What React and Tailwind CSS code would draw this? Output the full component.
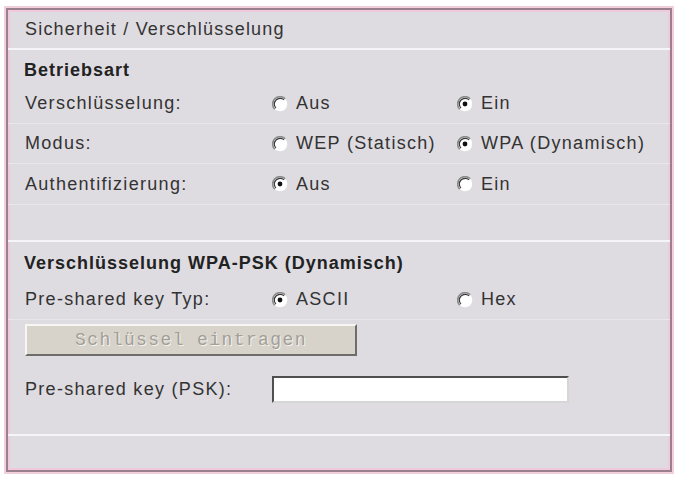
import React from "react";

const font = { fontFamily: '"Liberation Sans", Arial, sans-serif' };

function Radio({ checked }) {
  return (
    <svg width="16" height="16" viewBox="0 0 16 16" className="shrink-0">
      <circle cx="8" cy="8" r="7.3" fill="#ffffff" />
      <path d="M2.8 13.2 A7.3 7.3 0 0 1 13.2 2.8" stroke="#8a8a8a" strokeWidth="1.6" fill="none" />
      <path d="M3.9 12.1 A5.8 5.8 0 0 1 12.1 3.9" stroke="#3a3a3a" strokeWidth="1.2" fill="none" />
      {checked && <circle cx="8" cy="8" r="2.4" fill="#111111" />}
    </svg>
  );
}

function Option({ checked, label }) {
  return (
    <div className="flex items-center gap-[8px]">
      <Radio checked={checked} />
      <span>{label}</span>
    </div>
  );
}

function RadioRow({ label, a, b, checkedA, last }) {
  return (
    <div className={`flex items-center h-[40px] pl-[17px] ${last ? "" : "border-b border-[#e8e6eb]"}`}>
      <div className="w-[247px]">{label}</div>
      <div className="w-[185px]"><Option checked={checkedA} label={a} /></div>
      <div><Option checked={!checkedA} label={b} /></div>
    </div>
  );
}

export default function App() {
  return (
    <div className="w-[674px] h-[478px] bg-white pt-[8px] pl-[6px]" style={font}>
      <div className="w-[666px] h-[464px] border-2 border-[#9a7f8e] bg-[#dedce1] shadow-[0_0_0_2px_#f3cfdd,inset_0_0_0_2px_#efcadb] text-[18px] tracking-[1.3px] text-[#333333] flex flex-col">
        <div className="h-[40px] flex items-center pl-[17px] border-b-2 border-[#f5f4f7] text-[18px] tracking-[1.2px]">
          Sicherheit / Verschlüsselung
        </div>

        <div className="h-[34px] flex items-center pt-[6px] pl-[16px] font-bold tracking-[1px] text-[#222222]">
          Betriebsart
        </div>
        <RadioRow label="Verschlüsselung:" a="Aus" b="Ein" checkedA={false} />
        <RadioRow label="Modus:" a="WEP (Statisch)" b="WPA (Dynamisch)" checkedA={false} />
        <RadioRow label="Authentifizierung:" a="Aus" b="Ein" checkedA={true} last />
        <div className="h-[38px] border-t border-[#e8e6eb] border-b-2 border-b-[#f5f4f7]" />

        <div className="h-[38px] flex items-center pt-[4px] pl-[16px] font-bold tracking-[1px] text-[#222222]">
          Verschlüsselung WPA-PSK (Dynamisch)
        </div>
        <RadioRow label="Pre-shared key Typ:" a="ASCII" b="Hex" checkedA={true} />

        <div className="h-[42px] flex items-start pt-[4px] pl-[17px]">
          <div
            className="w-[332px] h-[32px] flex items-center justify-center bg-[#d7d3cb] border-2 border-t-[#f7f6f2] border-l-[#f7f6f2] border-b-[#6f6d6a] border-r-[#6f6d6a] text-[18px] tracking-[1.4px] text-[#a29e98] [text-shadow:1px_1px_0_#f4f2ee]"
            style={{ fontFamily: '"Liberation Mono", "Courier New", monospace' }}
          >
            Schlüssel eintragen
          </div>
        </div>

        <div className="h-[54px] flex items-center pl-[17px]">
          <div className="w-[247px]">Pre-shared key (PSK):</div>
          <div className="w-[297px] h-[27px] bg-white border-2 border-t-[#4f4f4f] border-l-[#4f4f4f] border-b-[#d6d6d6] border-r-[#d6d6d6]" />
        </div>

        <div className="h-[20px] border-b-2 border-[#f5f4f7]" />
        <div className="flex-1" />
      </div>
    </div>
  );
}
